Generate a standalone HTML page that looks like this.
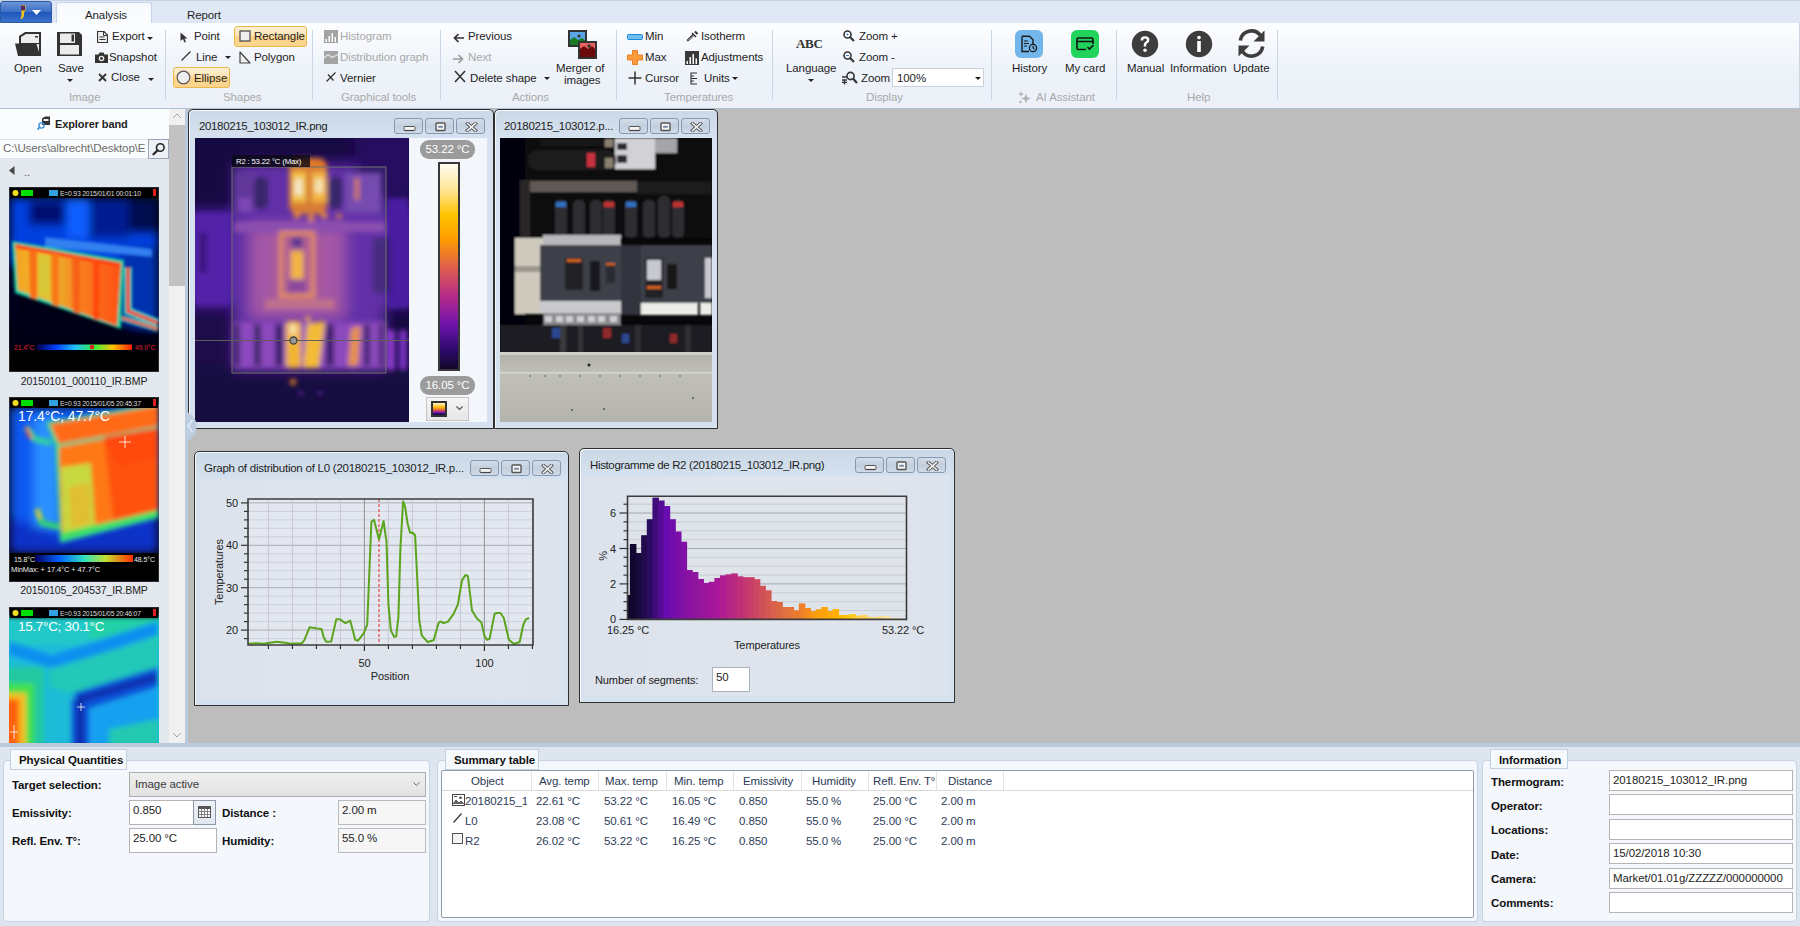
<!DOCTYPE html>
<html><head><meta charset="utf-8">
<style>
*{box-sizing:border-box;margin:0;padding:0}
html,body{width:1800px;height:926px;overflow:hidden;background:#bdbdbd;font-family:"Liberation Sans",sans-serif;font-size:11.5px;letter-spacing:-0.1px;color:#1e1e1e;position:relative}
.a{position:absolute}
.t{position:absolute;white-space:nowrap;line-height:14px}
.g{color:#a9a9a9}
.b{font-weight:bold}
/* ribbon */
#tabs{left:0;top:0;width:1800px;height:23px;background:#dfe8f4;border-top:1px solid #c4d2e3}
#rib{left:0;top:23px;width:1800px;height:86px;background:linear-gradient(#fdfeff 0px,#f6f8fc 20px,#eef3fa 45px,#ecf1f9 82px);border-bottom:1px solid #b3c2d3;border-right:1px solid #c9d5e3}
.sep{position:absolute;top:30px;width:1px;height:70px;background:#c9d6e5}
.dd{position:absolute;width:0;height:0;border-left:3px solid transparent;border-right:3px solid transparent;border-top:3px solid #222}
.hl{position:absolute;background:linear-gradient(#fdf0d6,#fde3b0 45%,#fcd48c 52%,#fbd58e);border:1px solid #eab74a;border-radius:3px}
/* windows */
.win{position:absolute;background:linear-gradient(#cbd8e6,#d6e2ef 30px,#d5e1ee);border:1px solid #2f2f2f;border-radius:5px 5px 0 0;box-shadow:inset 1px 1px 0 #f4f8fc}
.wt{position:absolute;white-space:nowrap;line-height:14px;color:#1e1e1e}
.wb{position:absolute;width:29px;height:16px;border:1px solid #8799b1;border-radius:3px;background:linear-gradient(#d4deea,#c3cfdd 50%,#cfdbe8)}
.cnt{position:absolute;background:#dfe4ec}
/* bottom */
.grp{position:absolute;background:#f4f7fb;border:1px solid #c5d3e2;border-radius:4px}
.tab{position:absolute;background:#f6f9fc;border:1px solid #c2d1e2;font-weight:bold;color:#111;line-height:14px;padding-left:8px}
.inp{position:absolute;background:#fff;border:1px solid #b4b4b4;padding:2px 0 0 3px;line-height:14px;white-space:nowrap;color:#1e1e1e}
</style></head><body>

<!-- ============ RIBBON ============ -->
<div id="tabs" class="a"></div>
<div class="a" style="left:0;top:1px;width:52px;height:22px;border-radius:3px 3px 0 0;background:linear-gradient(#6d95d6,#3d6fc6 48%,#1e57bb 52%,#3a72cc);border:1px solid #2a5aa8"></div>
<div class="a" style="left:56px;top:2px;width:96px;height:22px;background:linear-gradient(#f7fafd,#fbfdff);border:1px solid #c6d5e6;border-bottom:none;border-radius:3px 3px 0 0"></div>
<div class="t" style="left:85px;top:8px">Analysis</div>
<div class="t" style="left:187px;top:8px">Report</div>
<div id="rib" class="a"></div>
<!-- separators -->
<div class="sep" style="left:165px"></div>
<div class="sep" style="left:312px"></div>
<div class="sep" style="left:440px"></div>
<div class="sep" style="left:616px"></div>
<div class="sep" style="left:772px"></div>
<div class="sep" style="left:991px"></div>
<div class="sep" style="left:1116px"></div>
<div class="sep" style="left:1277px"></div>
<!-- group labels -->
<div class="t g" style="left:69px;top:90px">Image</div>
<div class="t g" style="left:223px;top:90px">Shapes</div>
<div class="t g" style="left:341px;top:90px">Graphical tools</div>
<div class="t g" style="left:512px;top:90px">Actions</div>
<div class="t g" style="left:664px;top:90px">Temperatures</div>
<div class="t g" style="left:866px;top:90px">Display</div>
<div class="t g" style="left:1036px;top:90px">AI Assistant</div>
<div class="t g" style="left:1187px;top:90px">Help</div>

<!-- IMAGE group -->
<svg class="a" style="left:15px;top:31px" width="27" height="26" viewBox="0 0 27 26">
 <polygon points="4,13 4,5 10,1 26,1 26,25 4,25" fill="#333"/>
 <polygon points="6,12 6,6 11,3 24,3 24,12" fill="#ececec"/>
 <rect x="20" y="5" width="3" height="1.5" fill="#333"/>
 <polygon points="0,12.5 21,12.5 26,25 3,25" fill="#333"/>
 <polygon points="21.5,13 24,13 24,21" fill="#ececec"/>
</svg>
<div class="t" style="left:14px;top:61px">Open</div>
<svg class="a" style="left:57px;top:32px" width="25" height="25" viewBox="0 0 25 25">
 <polygon points="0,0 22,0 25,3 25,24 0,24" fill="#333"/>
 <rect x="3" y="1.5" width="15" height="9.5" fill="#ececec"/>
 <rect x="14.5" y="2.5" width="2.5" height="7" fill="#333"/>
 <rect x="3" y="13" width="19" height="9.5" fill="#ececec"/>
</svg>
<div class="t" style="left:58px;top:61px">Save</div>
<div class="dd" style="left:67px;top:79px"></div>
<svg class="a" style="left:97px;top:31px" width="11" height="12" viewBox="0 0 11 12">
 <path d="M0.5 0.5H7L10.5 4V11.5H0.5Z" fill="#f0f0f0" stroke="#333" stroke-width="1.2"/>
 <path d="M6.5 0.5V4.5H10.5" fill="none" stroke="#333"/>
 <rect x="2.5" y="5.5" width="5" height="1" fill="#333"/><rect x="2.5" y="8" width="6" height="1" fill="#333"/>
</svg>
<div class="t" style="left:112px;top:29px">Export</div>
<div class="dd" style="left:147px;top:37px"></div>
<svg class="a" style="left:95px;top:52px" width="13" height="11" viewBox="0 0 13 11">
 <path d="M0 2.5H3.5L4.5 0.5H8.5L9.5 2.5H13V11H0Z" fill="#333"/>
 <circle cx="6.5" cy="6.5" r="2.8" fill="#e8e8e8"/><circle cx="6.5" cy="6.5" r="1.4" fill="#333"/>
</svg>
<div class="t" style="left:109px;top:50px">Snapshot</div>
<svg class="a" style="left:98px;top:73px" width="9" height="9" viewBox="0 0 9 9"><path d="M1 1L8 8M8 1L1 8" stroke="#333" stroke-width="1.8"/></svg>
<div class="t" style="left:111px;top:70px">Close</div>
<div class="dd" style="left:148px;top:78px"></div>

<!-- SHAPES -->
<div class="hl" style="left:234px;top:26px;width:73px;height:21px"></div>
<div class="hl" style="left:173px;top:67px;width:57px;height:21px"></div>
<svg class="a" style="left:180px;top:32px" width="8" height="11" viewBox="0 0 8 11"><path d="M0.5 0.5L7.5 6.5H4.5L6 10L4.5 10.5L3 7L0.5 9Z" fill="#333"/></svg>
<div class="t" style="left:194px;top:29px">Point</div>
<svg class="a" style="left:239px;top:30px" width="12" height="12" viewBox="0 0 12 12"><rect x="1" y="1" width="10" height="10" fill="#eee" stroke="#444" stroke-width="1.2"/></svg>
<div class="t" style="left:254px;top:29px">Rectangle</div>
<svg class="a" style="left:181px;top:51px" width="10" height="10" viewBox="0 0 10 10"><path d="M0.5 9.5L9.5 0.5" stroke="#333" stroke-width="1.3"/></svg>
<div class="t" style="left:196px;top:50px">Line</div>
<div class="dd" style="left:225px;top:56px"></div>
<svg class="a" style="left:239px;top:51px" width="12" height="13" viewBox="0 0 12 13"><path d="M1 1V12H11Z" fill="#eee" stroke="#444" stroke-width="1.2" stroke-linejoin="round"/></svg>
<div class="t" style="left:254px;top:50px">Polygon</div>
<svg class="a" style="left:176px;top:70px" width="15" height="15" viewBox="0 0 15 15"><circle cx="7.5" cy="7.5" r="6.3" fill="#eee" stroke="#555" stroke-width="1.2"/></svg>
<div class="t" style="left:194px;top:71px">Ellipse</div>

<!-- GRAPHICAL TOOLS -->
<svg class="a" style="left:324px;top:30px" width="14" height="13" viewBox="0 0 14 13"><rect width="14" height="13" fill="#a3a3a3"/><rect x="1.5" y="9" width="1.5" height="3" fill="#fff"/><rect x="4.5" y="6" width="1.5" height="6" fill="#fff"/><rect x="7.5" y="3" width="1.5" height="9" fill="#fff"/><rect x="10.5" y="7" width="1.5" height="5" fill="#fff"/></svg>
<div class="t g" style="left:340px;top:29px">Histogram</div>
<svg class="a" style="left:324px;top:51px" width="14" height="13" viewBox="0 0 14 13"><rect width="14" height="13" fill="#a3a3a3"/><path d="M0 7L4 3.5L8 6.5L14 3.5" stroke="#e6e6e6" stroke-width="1.2" fill="none"/></svg>
<div class="t g" style="left:340px;top:50px">Distribution graph</div>
<svg class="a" style="left:326px;top:72px" width="10" height="10" viewBox="0 0 10 10"><path d="M0.5 9.5L9.5 0.5M2 2.5L7.5 8.5" stroke="#333" stroke-width="1.3"/></svg>
<div class="t" style="left:340px;top:71px">Vernier</div>

<!-- ACTIONS -->
<svg class="a" style="left:453px;top:33px" width="12" height="10" viewBox="0 0 12 10"><path d="M11 5H2M5.5 1L1.5 5L5.5 9" stroke="#333" stroke-width="1.7" fill="none"/></svg>
<div class="t" style="left:468px;top:29px">Previous</div>
<svg class="a" style="left:452px;top:54px" width="12" height="10" viewBox="0 0 12 10"><path d="M1 5H10M6.5 1L10.5 5L6.5 9" stroke="#9a9a9a" stroke-width="1.7" fill="none"/></svg>
<div class="t g" style="left:468px;top:50px">Next</div>
<svg class="a" style="left:454px;top:70px" width="12" height="13" viewBox="0 0 12 13"><path d="M1 1L11 12M11 1L1 12" stroke="#333" stroke-width="1.6"/></svg>
<div class="t" style="left:470px;top:71px">Delete shape</div>
<div class="dd" style="left:544px;top:77px"></div>
<svg class="a" style="left:568px;top:30px" width="29" height="29" viewBox="0 0 29 29">
 <rect x="0" y="0" width="19" height="17" fill="#333"/><rect x="2" y="2" width="15" height="13" fill="#5aa5e6"/>
 <path d="M2 15V10L6 7L10 10L14 8L17 10V15Z" fill="#1a7a22"/><circle cx="11" cy="6" r="1.6" fill="#333"/>
 <rect x="10" y="11" width="19" height="18" fill="#333"/><rect x="12" y="13" width="15" height="14" fill="#e86060"/>
 <path d="M12 27V19L16 16L20 19L24 16L27 19V27Z" fill="#6a0a0a"/><circle cx="21" cy="16" r="1.7" fill="#333"/>
</svg>
<div class="t" style="left:556px;top:61px">Merger of</div>
<div class="t" style="left:564px;top:73px">images</div>

<!-- TEMPERATURES -->
<svg class="a" style="left:627px;top:34px" width="16" height="6" viewBox="0 0 16 6"><rect x="0.5" y="0.5" width="15" height="5" rx="1" fill="#6dc1f1" stroke="#1d88d6"/></svg>
<div class="t" style="left:645px;top:29px">Min</div>
<svg class="a" style="left:627px;top:50px" width="16" height="15" viewBox="0 0 16 15"><path d="M5.5 0.5H10.5V5H15.5V10H10.5V14.5H5.5V10H0.5V5H5.5Z" fill="#fb9a3a" stroke="#e8802a" stroke-linejoin="round"/></svg>
<div class="t" style="left:645px;top:50px">Max</div>
<svg class="a" style="left:628px;top:71px" width="14" height="14" viewBox="0 0 14 14"><path d="M7 0.5V13.5M0.5 7H13.5" stroke="#333" stroke-width="1.5"/></svg>
<div class="t" style="left:645px;top:71px">Cursor</div>
<svg class="a" style="left:686px;top:30px" width="13" height="12" viewBox="0 0 13 12"><path d="M1.5 10.5L7.5 4.5M9 1.5L11.5 4" stroke="#333" stroke-width="2"/><path d="M6 3L10 7" stroke="#333" stroke-width="1.5"/><path d="M1 11L3 10.5L8 5.5L7.2 4.8L2 9.5Z" fill="#ddd" stroke="#333" stroke-width="0.8"/></svg>
<div class="t" style="left:701px;top:29px">Isotherm</div>
<svg class="a" style="left:685px;top:51px" width="14" height="14" viewBox="0 0 14 14"><rect width="14" height="14" fill="#3a3a3a"/><rect x="1.5" y="10" width="1.5" height="3" fill="#fff"/><rect x="4.5" y="6" width="1.5" height="7" fill="#fff"/><rect x="7.5" y="3" width="1.5" height="10" fill="#fff"/><rect x="10.5" y="7.5" width="1.5" height="5.5" fill="#fff"/></svg>
<div class="t" style="left:701px;top:50px">Adjustments</div>
<svg class="a" style="left:690px;top:72px" width="9" height="13" viewBox="0 0 9 13"><path d="M1 0.5V12.5M1 1H7M1 4H4M1 6.5H7M1 9H4M1 12H7" stroke="#333" stroke-width="1.1" fill="none"/></svg>
<div class="t" style="left:704px;top:71px">Units</div>
<div class="dd" style="left:732px;top:77px"></div>

<!-- DISPLAY -->
<div class="t" style="left:796px;top:37px;font-family:'Liberation Serif',serif;font-weight:bold;font-size:13px;letter-spacing:-0.3px;color:#333">ABC</div>
<div class="t" style="left:786px;top:61px">Language</div>
<div class="dd" style="left:808px;top:79px"></div>
<svg class="a" style="left:843px;top:30px" width="12" height="12" viewBox="0 0 12 12"><circle cx="4.5" cy="4.5" r="3.5" fill="#fff" stroke="#333" stroke-width="1.6"/><path d="M7 7L11 11" stroke="#333" stroke-width="2.2"/><circle cx="4.5" cy="4.5" r="1" fill="#2a6fd0"/></svg>
<div class="t" style="left:859px;top:29px">Zoom +</div>
<svg class="a" style="left:843px;top:51px" width="12" height="12" viewBox="0 0 12 12"><circle cx="4.5" cy="4.5" r="3.5" fill="#fff" stroke="#333" stroke-width="1.6"/><path d="M7 7L11 11" stroke="#333" stroke-width="2.2"/><path d="M3 4.5H6" stroke="#2a6fd0" stroke-width="0.9"/></svg>
<div class="t" style="left:859px;top:50px">Zoom -</div>
<svg class="a" style="left:842px;top:71px" width="16" height="14" viewBox="0 0 16 14"><circle cx="8.5" cy="5" r="3.6" fill="none" stroke="#333" stroke-width="1.6"/><path d="M11 7.5L15 12" stroke="#333" stroke-width="2.2"/><path d="M0 6H5M0 9H5M2.5 9V13.5M0 11.3H5" stroke="#333" stroke-width="1.3"/></svg>
<div class="t" style="left:861px;top:71px">Zoom</div>
<div class="a" style="left:892px;top:68px;width:92px;height:19px;background:#fff;border:1px solid #c8d1dc"></div>
<div class="t" style="left:897px;top:71px">100%</div>
<div class="dd" style="left:975px;top:77px"></div>

<!-- AI ASSISTANT -->
<div class="a" style="left:1015px;top:30px;width:28px;height:28px;border-radius:6px;background:#72b6ec"></div>
<svg class="a" style="left:1021px;top:35px" width="17" height="18" viewBox="0 0 17 18">
 <path d="M1 1.2H8.5L12 4.7V9M1 1.2V16.5H8" fill="none" stroke="#1b1b1b" stroke-width="1.4"/>
 <path d="M3 6H7M3 8.5H8M3 11H6" stroke="#1b1b1b" stroke-width="1.1"/>
 <circle cx="12" cy="13" r="3.6" fill="#72b6ec" stroke="#1b1b1b" stroke-width="1.3"/><path d="M12 11V13.3L13.5 14.3" stroke="#1b1b1b" stroke-width="1"/>
</svg>
<div class="t" style="left:1012px;top:61px">History</div>
<div class="a" style="left:1071px;top:30px;width:28px;height:28px;border-radius:6px;background:#22d45b"></div>
<svg class="a" style="left:1076px;top:37px" width="19" height="14" viewBox="0 0 19 14">
 <path d="M10 12.5H2.5Q1 12.5 1 11V2.5Q1 1 2.5 1H15.5Q17 1 17 2.5V7" fill="none" stroke="#111" stroke-width="1.6"/>
 <path d="M1 4.5H17" stroke="#111" stroke-width="1.6"/><path d="M11.5 10L13.5 12L17.5 8" fill="none" stroke="#111" stroke-width="1.6"/>
</svg>
<div class="t" style="left:1065px;top:61px">My card</div>
<svg class="a" style="left:1018px;top:91px" width="13" height="13" viewBox="0 0 13 13"><path d="M8 2.5L9.3 6.2L13 7.5L9.3 8.8L8 12.5L6.7 8.8L3 7.5L6.7 6.2Z" fill="#b0b0b0"/><path d="M3 0L3.8 2.2L6 3L3.8 3.8L3 6L2.2 3.8L0 3L2.2 2.2Z" fill="#b0b0b0"/><circle cx="2.5" cy="11" r="1.2" fill="#b0b0b0"/></svg>

<!-- HELP -->
<svg class="a" style="left:1131px;top:30px" width="28" height="28" viewBox="0 0 28 28"><circle cx="14" cy="14" r="13.2" fill="#3d3d3d"/><path d="M9.6 10.5Q9.6 6.3 14 6.3Q18.4 6.3 18.4 10Q18.4 12.3 16 13.5Q15.2 14 15.2 15.5V16.5H12.7V15.2Q12.7 12.8 14.6 11.8Q15.9 11.1 15.9 10Q15.9 8.6 14 8.6Q12.1 8.6 12.1 10.5Z" fill="#fff"/><circle cx="14" cy="20.3" r="1.7" fill="#fff"/></svg>
<div class="t" style="left:1127px;top:61px">Manual</div>
<svg class="a" style="left:1185px;top:30px" width="28" height="28" viewBox="0 0 28 28"><circle cx="14" cy="14" r="13.2" fill="#3d3d3d"/><circle cx="14" cy="7.6" r="1.8" fill="#fff"/><rect x="12.2" y="11" width="3.6" height="11" fill="#fff"/></svg>
<div class="t" style="left:1170px;top:61px">Information</div>
<svg class="a" style="left:1237px;top:29px" width="29" height="29" viewBox="0 0 29 29"><path d="M3.3 11.5A11.3 11.3 0 0 1 23.5 6.5" fill="none" stroke="#3d3d3d" stroke-width="3.6"/><path d="M27.5 1.5V12.5H16.5Z" fill="#3d3d3d"/><path d="M25.7 17.5A11.3 11.3 0 0 1 5.5 22.5" fill="none" stroke="#3d3d3d" stroke-width="3.6"/><path d="M1.5 27.5V16.5H12.5Z" fill="#3d3d3d"/></svg>
<div class="t" style="left:1233px;top:61px">Update</div>

<!-- app button logo -->
<svg class="a" style="left:19px;top:4px" width="8" height="16" viewBox="0 0 8 16"><path d="M2 1H6.5V6.5L5 9V12L3 15H1.5L2.5 11V8L2 6Z" fill="#f2c21a"/><rect x="2" y="1.5" width="4" height="5" fill="#5a2a5a"/></svg>
<svg class="a" style="left:32px;top:10px" width="9" height="6" viewBox="0 0 9 6"><path d="M0 0H9L4.5 5Z" fill="#fff"/></svg>


<!-- ============ EXPLORER ============ -->
<div class="a" style="left:0;top:109px;width:169px;height:634px;background:#e3e8ef"></div>
<div class="a" style="left:0;top:109px;width:169px;height:30px;background:#fbfcfe"></div>
<svg class="a" style="left:37px;top:116px" width="14" height="14" viewBox="0 0 14 14"><path d="M5 2.5L8 0.5H13V9H5Z" fill="#333"/><rect x="6.5" y="3" width="5" height="2" fill="#eee"/><circle cx="4.5" cy="9.5" r="2.6" fill="none" stroke="#3b8fd6" stroke-width="1.4"/><path d="M2.6 11.4L0.5 13.5" stroke="#3b8fd6" stroke-width="1.6"/></svg>
<div class="t b" style="left:55px;top:117px;font-size:11px">Explorer band</div>
<div class="a" style="left:0;top:139px;width:149px;height:20px;background:#fbfcfd;border:1px solid #dde3ea;border-left:none"></div>
<div class="t" style="left:3px;top:141px;color:#6d6d6d">C:\Users\albrecht\Desktop\E</div>
<div class="a" style="left:148px;top:139px;width:21px;height:20px;background:#eef2f8;border:1px solid #9aa6b4"></div>
<svg class="a" style="left:152px;top:142px" width="14" height="14" viewBox="0 0 14 14"><circle cx="8.3" cy="5.5" r="3.8" fill="none" stroke="#222" stroke-width="1.6"/><path d="M5.6 8.2L1.5 12.3" stroke="#222" stroke-width="2.2" stroke-linecap="round"/></svg>
<svg class="a" style="left:9px;top:166px" width="6" height="9" viewBox="0 0 6 9"><path d="M5.5 0V9L0 4.5Z" fill="#444"/></svg>
<div class="t" style="left:24px;top:165px;color:#555">..</div>
<!-- scrollbar -->
<div class="a" style="left:169px;top:109px;width:16px;height:634px;background:#f0f0f0"></div>
<div class="a" style="left:169px;top:125px;width:16px;height:161px;background:#c2c2c2"></div>
<svg class="a" style="left:172px;top:113px" width="10" height="6" viewBox="0 0 10 6"><path d="M1 5L5 1L9 5" fill="none" stroke="#a3a3a3" stroke-width="1"/></svg>
<svg class="a" style="left:172px;top:732px" width="10" height="6" viewBox="0 0 10 6"><path d="M1 1L5 5L9 1" fill="none" stroke="#a3a3a3" stroke-width="1"/></svg>
<div class="a" style="left:185px;top:109px;width:3px;height:634px;background:#b9cbdf"></div>

<!-- thumbnail 1 -->
<svg class="a" style="left:9px;top:187px" width="150" height="185" viewBox="0 0 150 185">
 <defs><filter id="bl1" x="-10%" y="-10%" width="120%" height="120%"><feGaussianBlur stdDeviation="1.6"/></filter>
 <filter id="bl1b" x="-10%" y="-10%" width="120%" height="120%"><feGaussianBlur stdDeviation="4"/></filter>
 <linearGradient id="cb1" x1="0" x2="1"><stop offset="0" stop-color="#000050"/><stop offset="0.2" stop-color="#0040ff"/><stop offset="0.4" stop-color="#20c0ff"/><stop offset="0.6" stop-color="#30f040"/><stop offset="0.8" stop-color="#ffc000"/><stop offset="1" stop-color="#ff2000"/></linearGradient>
 <linearGradient id="rad1" x1="0" x2="1"><stop offset="0" stop-color="#f8a020"/><stop offset="0.3" stop-color="#e8c030"/><stop offset="0.6" stop-color="#f88020"/><stop offset="1" stop-color="#ff5010"/></linearGradient></defs>
 <rect width="150" height="185" fill="#2a2a2a"/>
 <rect x="1" y="1" width="148" height="183" fill="#000"/>
 <g filter="url(#bl1b)">
  <rect x="1" y="11" width="148" height="150" fill="#000a40"/>
  <rect x="1" y="11" width="148" height="66" fill="#0040e0"/>
  <rect x="20" y="14" width="36" height="24" fill="#001070"/>
  <rect x="80" y="11" width="40" height="40" fill="#001a90"/>
  <rect x="120" y="11" width="29" height="35" fill="#000a50"/>
  <rect x="58" y="11" width="22" height="40" fill="#0a60ff"/>
  <rect x="112" y="60" width="37" height="80" fill="#0030b0"/>
  <polygon points="5,100 112,135 149,145 149,160 1,160" fill="#000418"/>
 </g>
 <g filter="url(#bl1)">
  <polygon points="36,50 143,62 143,70 36,60" fill="#3080f0"/>
  <polygon points="3,54 115,73 112,142 6,106" fill="#10d0a0"/>
  <polygon points="6,57 112,76 108,139 9,103" fill="url(#rad1)"/>
  <polygon points="6,57 112,76 112,80 6,61" fill="#ff3a10"/>
  <polygon points="20,62 28,63 28,113 21,111" fill="#f87018"/>
  <polygon points="42,66 50,67 50,120 43,118" fill="#f87818"/>
  <polygon points="63,69 71,70 71,127 64,125" fill="#f86018"/>
  <polygon points="84,72 91,73 90,133 84,132" fill="#ff4a10"/>
  <polygon points="30,68 40,69 40,110 30,107" fill="#d8c838"/>
  <path d="M119 80V124L149 136" fill="none" stroke="#20d0c0" stroke-width="8"/>
  <path d="M119 80V124L149 136" fill="none" stroke="#ff2010" stroke-width="3.5"/>
  <path d="M113 131L149 142" fill="none" stroke="#20c0c0" stroke-width="6"/>
  <path d="M113 131L149 142" fill="none" stroke="#ff4010" stroke-width="2.5"/>
 </g>
 <rect x="1" y="1" width="148" height="10" fill="#000"/>
 <circle cx="6.5" cy="6" r="3" fill="#f0e020"/>
 <rect x="12" y="3" width="12" height="6" fill="#00e000"/>
 <rect x="40" y="3" width="9" height="6" fill="#30a0e0"/>
 <text x="51" y="9" fill="#ddd" font-size="6.8" font-family="Liberation Sans" letter-spacing="-0.2">E=0.93  2015/01/01 00:01:10</text>
 <rect x="144" y="2" width="3" height="7" fill="#e02020"/>
 <rect x="28" y="157.5" width="95" height="5.5" fill="url(#cb1)"/>
 <circle cx="83" cy="160" r="2.3" fill="#e02020"/>
 <text x="5" y="163" fill="#e02020" font-size="6.8" font-family="Liberation Sans">21.4°C</text>
 <text x="126" y="163" fill="#e02020" font-size="6.8" font-family="Liberation Sans">49.0°C</text>
</svg>
<div class="t" style="left:9px;top:374px;width:150px;text-align:center;font-size:10.5px;color:#222">20150101_000110_IR.BMP</div>

<!-- thumbnail 2 -->
<svg class="a" style="left:9px;top:397px" width="150" height="185" viewBox="0 0 150 185">
 <defs><filter id="bl2" x="-10%" y="-10%" width="120%" height="120%"><feGaussianBlur stdDeviation="2"/></filter>
 <filter id="bl2b" x="-10%" y="-10%" width="120%" height="120%"><feGaussianBlur stdDeviation="5"/></filter>
 <linearGradient id="cb2" x1="0" x2="1"><stop offset="0" stop-color="#000060"/><stop offset="0.25" stop-color="#0060ff"/><stop offset="0.5" stop-color="#30e0c0"/><stop offset="0.72" stop-color="#c0e030"/><stop offset="1" stop-color="#ff3000"/></linearGradient></defs>
 <rect width="150" height="185" fill="#2a2a2a"/>
 <rect x="1" y="1" width="148" height="183" fill="#000"/>
 <g filter="url(#bl2b)">
  <rect x="1" y="10" width="148" height="146" fill="#1058f0"/>
  <rect x="25" y="20" width="25" height="110" fill="#2a90ff"/>
  <polygon points="1,120 53,140 149,118 149,156 1,156" fill="#0a30c8"/>
 </g>
 <g filter="url(#bl2)">
  <polygon points="37,25 149,6 149,121 51,146 46,49" fill="#30d890"/>
  <polygon points="41,27 149,9 149,29 50,47" fill="#ff6a18"/>
  <polygon points="50,50 149,32 149,117 53,140" fill="#ff5210"/>
  <polygon points="50,50 95,42 105,128 53,140" fill="#ff7818"/>
  <polygon points="52,70 82,66 86,128 54,138" fill="#c8d840"/>
  <polygon points="60,90 80,86 82,126 62,132" fill="#e0c030"/>
  <polygon points="52,136 149,113 149,119 53,142" fill="#40e060"/>
  <polygon points="95,40 149,31 149,60 110,70" fill="#ff4a10"/>
  <path d="M17 30L26 42L42 46" fill="none" stroke="#30d0a0" stroke-width="6"/>
  <path d="M17 30L22 42" fill="none" stroke="#ff4010" stroke-width="3"/>
  <path d="M28 112L33 126L50 130" fill="none" stroke="#30d070" stroke-width="6"/>
  <path d="M28 112L31 122" fill="none" stroke="#f0c020" stroke-width="3"/>
 </g>
 <rect x="1" y="1" width="148" height="10" fill="#000"/>
 <circle cx="6.5" cy="6" r="3" fill="#f0e020"/><rect x="12" y="3" width="12" height="6" fill="#00e000"/><rect x="40" y="3" width="9" height="6" fill="#30a0e0"/>
 <text x="51" y="9" fill="#ddd" font-size="6.8" font-family="Liberation Sans" letter-spacing="-0.2">E=0.93  2015/01/05 20:45:37</text>
 <rect x="144" y="2" width="3" height="7" fill="#e02020"/>
 <text x="9" y="24" fill="#fff" font-size="15" font-family="Liberation Sans" textLength="92" lengthAdjust="spacingAndGlyphs">17.4°C; 47.7°C</text>
 <rect x="1" y="156" width="148" height="28" fill="#000"/>
 <rect x="26" y="158" width="98" height="7" fill="url(#cb2)"/>
 <text x="5" y="165" fill="#eee" font-size="7" font-family="Liberation Sans">15.8°C</text>
 <text x="125" y="165" fill="#eee" font-size="7" font-family="Liberation Sans">48.5°C</text>
 <text x="2" y="175" fill="#eee" font-size="7.5" font-family="Liberation Sans">MinMax: + 17.4°C   + 47.7°C</text>
 <path d="M116 39V51M110 45H122" stroke="#fff" stroke-width="0.8"/>
</svg>
<div class="t" style="left:9px;top:583px;width:150px;text-align:center;font-size:10.5px;color:#222">20150105_204537_IR.BMP</div>

<!-- thumbnail 3 -->
<svg class="a" style="left:9px;top:607px" width="150" height="136" viewBox="0 0 150 136">
 <defs><filter id="bl3" x="-10%" y="-10%" width="120%" height="120%"><feGaussianBlur stdDeviation="2.8"/></filter></defs>
 <rect width="150" height="136" fill="#2a2a2a"/>
 <rect x="1" y="1" width="148" height="135" fill="#000"/>
 <g filter="url(#bl3)">
  <rect x="-5" y="10" width="160" height="130" fill="#1cbcd8"/>
  <rect x="-5" y="10" width="160" height="28" fill="#22c8c8"/>
  <rect x="80" y="10" width="70" height="22" fill="#20d0a8"/>
  <polygon points="0,34 43,48 149,14 149,28 45,62 0,48" fill="#1090f0"/>
  <polygon points="40,62 149,30 149,62 66,88 40,80" fill="#20c8b8"/>
  <polygon points="64,86 149,60 149,80 72,104" fill="#1050d8"/>
  <rect x="62" y="92" width="18" height="48" fill="#1050d8"/>
  <polygon points="80,102 149,80 149,140 80,140" fill="#18a0f0"/>
  <polygon points="100,122 149,112 149,140 100,140" fill="#20c8b0"/>
  <rect x="-5" y="60" width="40" height="80" fill="#20c8a0"/>
  <rect x="-5" y="76" width="30" height="64" fill="#40e050"/>
  <rect x="-5" y="86" width="22" height="54" fill="#f0c020"/>
  <rect x="-5" y="92" width="15" height="48" fill="#ff6010"/>
  <path d="M68 93L149 70" stroke="#0a2aa8" stroke-width="6"/>
  <path d="M71 93V140" stroke="#0a2aa8" stroke-width="7"/>
 </g>
 <rect x="1" y="1" width="148" height="10" fill="#000"/>
 <circle cx="6.5" cy="6" r="3" fill="#f0e020"/><rect x="12" y="3" width="12" height="6" fill="#00e000"/><rect x="40" y="3" width="9" height="6" fill="#30a0e0"/>
 <text x="51" y="9" fill="#ddd" font-size="6.8" font-family="Liberation Sans" letter-spacing="-0.2">E=0.93  2015/01/05 20:46:07</text>
 <rect x="144" y="2" width="3" height="7" fill="#e02020"/>
 <text x="9" y="24" fill="#fff" font-size="13.5" font-family="Liberation Sans" letter-spacing="-0.3">15.7°C; 30.1°C</text>
 <path d="M72 96V104M68 100H76" stroke="#fff" stroke-width="0.8"/>
 <path d="M5 118V132M1 125H9" stroke="#fff" stroke-width="0.8"/>
</svg>

<!-- ============ WINDOWS ============ -->
<!-- IR window -->
<div class="win" style="left:188px;top:109px;width:306px;height:320px"></div>
<div class="wt" style="left:199px;top:119px;letter-spacing:-0.36px">20180215_103012_IR.png</div>
<div class="wb" style="left:394px;top:118px"><svg class="a" style="left:8px;top:6px" width="13" height="7" viewBox="0 0 13 7"><rect x="1" y="1.5" width="11" height="4" rx="0.8" fill="#f4f4f4" stroke="#555" stroke-width="1"/><path d="M1.5 5.5H11.5" stroke="#444" stroke-width="1.2"/></svg></div><div class="wb" style="left:425px;top:118px"><svg class="a" style="left:9px;top:3px" width="11" height="10" viewBox="0 0 11 10"><rect x="1" y="1" width="9" height="7.5" rx="0.8" fill="#f4f4f4" stroke="#555" stroke-width="1.4"/><rect x="3.2" y="3.8" width="4.6" height="2" fill="#7a8aa0"/></svg></div><div class="wb" style="left:456px;top:118px"><svg class="a" style="left:8px;top:3px" width="13" height="10" viewBox="0 0 13 10"><path d="M2.5 1.5L10.5 8.5M10.5 1.5L2.5 8.5" stroke="#555" stroke-width="3.4" stroke-linecap="square"/><path d="M2.5 1.5L10.5 8.5M10.5 1.5L2.5 8.5" stroke="#f4f4f4" stroke-width="1.6" stroke-linecap="square"/></svg></div>
<div class="a" style="left:409px;top:138px;width:78px;height:284px;background:#f3f6fa"></div>
<div class="a" style="left:420px;top:140px;width:55px;height:19px;border-radius:9px;background:#9b9b9b;color:#fff;text-align:center;line-height:19px;font-size:11.5px">53.22 °C</div>
<div class="a" style="left:438px;top:162px;width:22px;height:209px;border:2px solid #383838;background:linear-gradient(#fffdf2 0%,#ffe89a 12%,#ffc400 25%,#ff9c00 37%,#e0604a 50%,#b82c88 64%,#7014ac 78%,#300a70 90%,#120828 100%)"></div>
<div class="a" style="left:420px;top:376px;width:55px;height:19px;border-radius:9px;background:#9b9b9b;color:#fff;text-align:center;line-height:19px;font-size:11.5px">16.05 °C</div>
<div class="a" style="left:426px;top:397px;width:43px;height:24px;background:linear-gradient(#f4f4f4,#e6e6e6);border:1px solid #c3c3c3"></div>
<div class="a" style="left:431px;top:401px;width:16px;height:16px;border:2px solid #333;background:linear-gradient(#fff6c0,#ffb000 40%,#c03080 70%,#4010a0 85%,#100828)"></div>
<svg class="a" style="left:456px;top:406px" width="7" height="5" viewBox="0 0 7 5"><path d="M0.5 0.5L3.5 3.5L6.5 0.5" fill="none" stroke="#555" stroke-width="1.2"/></svg>

<!-- IR image -->
<svg class="a" style="left:195px;top:138px" width="214" height="284" viewBox="0 0 214 284">
 <defs>
  <filter id="bir" x="-5%" y="-5%" width="110%" height="110%"><feGaussianBlur stdDeviation="2.6"/></filter>
  <filter id="bir2" x="-20%" y="-20%" width="140%" height="140%"><feGaussianBlur stdDeviation="7"/></filter>
 </defs>
 <rect width="214" height="284" fill="#160a42"/>
 <g filter="url(#bir2)">
  <rect x="-10" y="72" width="234" height="96" fill="#4c1a9c"/>
  <rect x="-10" y="170" width="60" height="60" fill="#1e0c4a"/>
  <rect x="40" y="25" width="150" height="205" fill="#5c20a8"/>
  <rect x="55" y="88" width="95" height="92" fill="#a44ea4"/>
  <rect x="-10" y="232" width="234" height="60" fill="#150a40"/>
  <rect x="160" y="-10" width="60" height="70" fill="#261060"/>
 </g>
 <g filter="url(#bir)">
  <rect x="0" y="75" width="36" height="92" fill="#5222a8"/>
  <rect x="4" y="95" width="8" height="40" fill="#3a1680"/>
  <rect x="192" y="60" width="22" height="110" fill="#4a1aa0"/>
  <rect x="178" y="100" width="18" height="55" fill="#3a1a78"/>
  <rect x="40" y="35" width="20" height="40" fill="#5a2c98"/><rect x="44" y="60" width="12" height="14" fill="#7a3ab8"/>
  <rect x="150" y="35" width="36" height="40" fill="#7040b0"/>
  <rect x="59" y="39" width="14" height="32" rx="6" fill="#2a1660"/>
  <rect x="133" y="39" width="14" height="32" rx="6" fill="#2a1660"/>
  <rect x="94" y="20" width="38" height="56" rx="9" fill="#e07828"/>
  <rect x="97" y="34" width="14" height="30" fill="#ffc838"/>
  <rect x="100" y="41" width="7" height="16" fill="#fff6d0"/>
  <rect x="117" y="34" width="15" height="30" fill="#ffb830"/>
  <rect x="120" y="41" width="8" height="14" fill="#fff0b0"/>
  <rect x="160" y="40" width="4" height="22" fill="#e07838"/>
  <circle cx="102" cy="77" r="3.5" fill="#f08830"/><circle cx="116" cy="80" r="3.5" fill="#f08838"/><circle cx="129" cy="77" r="3.5" fill="#f08838"/><circle cx="144" cy="78" r="3" fill="#d07048"/>
  <rect x="40" y="84" width="150" height="10" fill="#8a44b0"/>
  <rect x="75" y="100" width="55" height="65" fill="#a8509c"/>
  <rect x="86" y="95" width="32" height="63" fill="none" stroke="#f08c3c" stroke-width="4"/>
  <rect x="90" y="97" width="24" height="59" fill="#b85c8c"/>
  <rect x="96" y="99" width="12" height="11" fill="#5a2a90"/>
  <rect x="96" y="113" width="12" height="28" fill="#ffb830"/>
  <rect x="93" y="142" width="18" height="13" fill="#8a3c9c"/>
  <rect x="70" y="161" width="70" height="10" fill="#c46c88"/>
  <circle cx="113" cy="181" r="3" fill="#f0a040"/>
  <rect x="38" y="184" width="153" height="46" fill="#8a3cc0"/>
  <rect x="39" y="186" width="6" height="42" fill="#2e1464"/><rect x="59" y="186" width="7" height="42" fill="#2e1464"/><rect x="80" y="186" width="8" height="42" fill="#2a1060"/>
  <rect x="131" y="186" width="8" height="42" fill="#2a1060"/><rect x="169" y="186" width="6" height="42" fill="#2e1464"/><rect x="184" y="186" width="5" height="42" fill="#2e1464"/>
  <rect x="91" y="183" width="15" height="47" rx="4" fill="#ffb820"/>
  <rect x="95" y="186" width="6" height="10" fill="#fff0b0"/>
  <polygon points="112,186 130,183 124,230 108,230" fill="#ffc028"/>
  <polygon points="156,190 166,188 163,228 153,228" fill="#f09040"/>
  <rect x="192" y="192" width="8" height="40" fill="#8a3ac8"/><rect x="204" y="192" width="8" height="40" fill="#7a30c0"/>
  <circle cx="98" cy="244" r="3" fill="#f08a20"/>
  <circle cx="106" cy="255" r="2" fill="#7a30b8"/><circle cx="125" cy="255" r="2" fill="#7a30b8"/>
 </g>
 <rect x="37" y="29" width="154" height="206" fill="rgba(160,160,170,0.12)" stroke="#707070" stroke-width="1"/>
 <rect x="37" y="17" width="78" height="12" fill="rgba(10,10,20,0.8)"/>
 <text x="41" y="26" fill="#fff" font-size="7.8" font-family="Liberation Sans" letter-spacing="-0.2">R2 : 53.22 °C (Max)</text>
 <path d="M0 202.5H214" stroke="#5e5e5e" stroke-width="1"/>
 <circle cx="98.5" cy="202.5" r="3.5" fill="#9a9a9a" stroke="#444" stroke-width="1.3"/>
</svg>

<!-- Photo window -->
<div class="win" style="left:494px;top:109px;width:224px;height:320px"></div>
<div class="wt" style="left:504px;top:119px;letter-spacing:-0.3px">20180215_103012.p...</div>
<div class="wb" style="left:619px;top:118px"><svg class="a" style="left:8px;top:6px" width="13" height="7" viewBox="0 0 13 7"><rect x="1" y="1.5" width="11" height="4" rx="0.8" fill="#f4f4f4" stroke="#555" stroke-width="1"/><path d="M1.5 5.5H11.5" stroke="#444" stroke-width="1.2"/></svg></div><div class="wb" style="left:650px;top:118px"><svg class="a" style="left:9px;top:3px" width="11" height="10" viewBox="0 0 11 10"><rect x="1" y="1" width="9" height="7.5" rx="0.8" fill="#f4f4f4" stroke="#555" stroke-width="1.4"/><rect x="3.2" y="3.8" width="4.6" height="2" fill="#7a8aa0"/></svg></div><div class="wb" style="left:681px;top:118px"><svg class="a" style="left:8px;top:3px" width="13" height="10" viewBox="0 0 13 10"><path d="M2.5 1.5L10.5 8.5M10.5 1.5L2.5 8.5" stroke="#555" stroke-width="3.4" stroke-linecap="square"/><path d="M2.5 1.5L10.5 8.5M10.5 1.5L2.5 8.5" stroke="#f4f4f4" stroke-width="1.6" stroke-linecap="square"/></svg></div>
<svg class="a" style="left:500px;top:138px" width="212" height="284" viewBox="0 0 212 284">
 <defs><filter id="bph" x="-5%" y="-5%" width="110%" height="110%"><feGaussianBlur stdDeviation="1.3"/></filter>
 <linearGradient id="pb" x1="0" x2="0" y1="0" y2="1"><stop offset="0" stop-color="#b0b0a8"/><stop offset="0.3" stop-color="#c0c0b8"/><stop offset="1" stop-color="#b4b4ac"/></linearGradient></defs>
 <rect width="212" height="284" fill="#08080a"/>
 <g filter="url(#bph)">
  <rect x="0" y="0" width="212" height="100" fill="#0a0a0c"/><rect x="0" y="0" width="25" height="284" fill="#060608"/>
  <rect x="115" y="0" width="40" height="31" fill="#d2d2d6"/>
  <rect x="117" y="5" width="10" height="7" fill="#2a2a2a"/><rect x="117" y="17" width="10" height="8" fill="#2a2a2a"/>
  <rect x="155" y="0" width="22" height="15" fill="#a4a4aa"/>
  <rect x="28" y="12" width="88" height="20" rx="9" fill="#1c1c1e"/><rect x="40" y="0" width="75" height="8" fill="#161618"/><rect x="105" y="20" width="8" height="10" fill="#8a8070"/><rect x="105" y="1" width="8" height="8" fill="#8a8070"/>
  <rect x="87" y="15" width="8" height="14" fill="#c83040"/>
  <rect x="25" y="43" width="112" height="11" fill="#5e5954"/><rect x="137" y="44" width="75" height="12" fill="#1a1a1a"/>
  <rect x="20" y="42" width="10" height="60" fill="#2a2826"/>
  <rect x="55" y="62" width="12" height="38" rx="5" fill="#2e2e32"/><rect x="56" y="64" width="10" height="5" fill="#3070c0"/>
  <rect x="73" y="62" width="12" height="38" rx="5" fill="#2e2e32"/>
  <rect x="90" y="62" width="12" height="38" rx="5" fill="#2e2e32"/>
  <rect x="103" y="62" width="12" height="38" rx="5" fill="#2e2e32"/><rect x="104" y="64" width="10" height="5" fill="#c03030"/>
  <rect x="125" y="62" width="12" height="38" rx="5" fill="#2e2e32"/><rect x="126" y="64" width="10" height="5" fill="#3070c0"/>
  <rect x="143" y="62" width="12" height="38" rx="5" fill="#2e2e32"/>
  <rect x="158" y="58" width="12" height="42" rx="5" fill="#2e2e32"/>
  <rect x="172" y="62" width="12" height="38" rx="5" fill="#2e2e32"/><rect x="173" y="64" width="10" height="5" fill="#c03030"/>
  <rect x="15" y="100" width="28" height="76" fill="#cfcabe"/>
  <rect x="15" y="128" width="28" height="6" fill="#9a968e"/>
  <rect x="43" y="97" width="78" height="11" fill="#b8b8bc"/>
  <rect x="40" y="107" width="172" height="58" fill="#3c404a"/>
  <rect x="121" y="107" width="20" height="70" fill="#32363e"/>
  <rect x="65" y="120" width="18" height="32" fill="#202228"/>
  <rect x="67" y="121" width="14" height="3" fill="#d06020"/>
  <rect x="90" y="123" width="10" height="30" fill="#18181c"/>
  <rect x="106" y="127" width="9" height="18" fill="#2a2a30"/>
  <rect x="145" y="120" width="18" height="40" fill="#202228"/>
  <rect x="147" y="122" width="14" height="20" fill="#c8c8d0"/>
  <rect x="147" y="148" width="14" height="3" fill="#d06020"/>
  <rect x="167" y="126" width="10" height="25" fill="#141418"/>
  <rect x="205" y="120" width="7" height="40" fill="#c8c8d0"/>
  <rect x="40" y="163" width="81" height="12" fill="#c9c9cc"/>
  <rect x="141" y="165" width="57" height="12" fill="#ecece8"/>
  <rect x="200" y="165" width="12" height="12" fill="#ecece8"/>
  <rect x="43" y="175" width="78" height="12" fill="#8a8a8e"/>
  <rect x="45" y="178" width="7" height="6" fill="#d0d0d2"/><rect x="56" y="178" width="7" height="6" fill="#d0d0d2"/><rect x="66" y="178" width="7" height="6" fill="#d0d0d2"/><rect x="77" y="178" width="7" height="6" fill="#d0d0d2"/><rect x="88" y="178" width="7" height="6" fill="#d0d0d2"/><rect x="98" y="178" width="7" height="6" fill="#d0d0d2"/><rect x="110" y="178" width="7" height="6" fill="#d0d0d2"/>
  <rect x="0" y="187" width="212" height="28" fill="#1e1e22"/>
  <rect x="60" y="187" width="6" height="28" fill="#3a3a3e"/><rect x="78" y="187" width="5" height="28" fill="#343438"/><rect x="135" y="187" width="6" height="28" fill="#2e2e32"/><rect x="185" y="187" width="6" height="28" fill="#2e2e32"/>
  <rect x="52" y="190" width="8" height="10" fill="#2a4a90"/><rect x="103" y="190" width="8" height="10" fill="#902a2a"/><rect x="122" y="196" width="7" height="9" fill="#2a4a90"/><rect x="170" y="196" width="7" height="9" fill="#902a2a"/>
  <rect x="106" y="125" width="9" height="2.5" fill="#d06020"/>
 </g>
 <rect x="0" y="214" width="212" height="70" fill="url(#pb)"/>
 <rect x="0" y="214" width="212" height="3" fill="#d0d0cc"/>
 <rect x="0" y="234" width="212" height="1.5" fill="#d6d6d0"/>
 <circle cx="89" cy="227" r="1.5" fill="#222"/>
 <g fill="#555"><circle cx="30" cy="238" r="0.8"/><circle cx="45" cy="238" r="0.8"/><circle cx="60" cy="238" r="0.8"/><circle cx="80" cy="238" r="0.8"/><circle cx="100" cy="238" r="0.8"/><circle cx="120" cy="238" r="0.8"/><circle cx="140" cy="238" r="0.8"/><circle cx="160" cy="238" r="0.8"/><circle cx="180" cy="238" r="0.8"/><circle cx="72" cy="272" r="1"/><circle cx="104" cy="271" r="1"/><circle cx="193" cy="260" r="1"/></g>
</svg>

<!-- Graph window -->
<div class="win" style="left:194px;top:451px;width:375px;height:255px"></div>
<div class="cnt" style="left:200px;top:479px;width:363px;height:220px;background:linear-gradient(90deg,#dde3ec,#dfe4ec 80%,#dbe3ee)"></div>
<div class="wt" style="left:204px;top:461px;letter-spacing:-0.24px">Graph of distribution of L0 (20180215_103012_IR.p...</div>
<div class="wb" style="left:470px;top:460px"><svg class="a" style="left:8px;top:6px" width="13" height="7" viewBox="0 0 13 7"><rect x="1" y="1.5" width="11" height="4" rx="0.8" fill="#f4f4f4" stroke="#555" stroke-width="1"/><path d="M1.5 5.5H11.5" stroke="#444" stroke-width="1.2"/></svg></div><div class="wb" style="left:501px;top:460px"><svg class="a" style="left:9px;top:3px" width="11" height="10" viewBox="0 0 11 10"><rect x="1" y="1" width="9" height="7.5" rx="0.8" fill="#f4f4f4" stroke="#555" stroke-width="1.4"/><rect x="3.2" y="3.8" width="4.6" height="2" fill="#7a8aa0"/></svg></div><div class="wb" style="left:532px;top:460px"><svg class="a" style="left:8px;top:3px" width="13" height="10" viewBox="0 0 13 10"><path d="M2.5 1.5L10.5 8.5M10.5 1.5L2.5 8.5" stroke="#555" stroke-width="3.4" stroke-linecap="square"/><path d="M2.5 1.5L10.5 8.5M10.5 1.5L2.5 8.5" stroke="#f4f4f4" stroke-width="1.6" stroke-linecap="square"/></svg></div>

<!-- Histogram window -->
<div class="win" style="left:579px;top:448px;width:376px;height:255px"></div>
<div class="cnt" style="left:585px;top:476px;width:364px;height:220px;background:linear-gradient(90deg,#dde3ec,#dfe4ec 80%,#dbe3ee)"></div>
<div class="wt" style="left:590px;top:458px;letter-spacing:-0.36px">Histogramme de R2 (20180215_103012_IR.png)</div>
<div class="wb" style="left:855px;top:457px"><svg class="a" style="left:8px;top:6px" width="13" height="7" viewBox="0 0 13 7"><rect x="1" y="1.5" width="11" height="4" rx="0.8" fill="#f4f4f4" stroke="#555" stroke-width="1"/><path d="M1.5 5.5H11.5" stroke="#444" stroke-width="1.2"/></svg></div><div class="wb" style="left:886px;top:457px"><svg class="a" style="left:9px;top:3px" width="11" height="10" viewBox="0 0 11 10"><rect x="1" y="1" width="9" height="7.5" rx="0.8" fill="#f4f4f4" stroke="#555" stroke-width="1.4"/><rect x="3.2" y="3.8" width="4.6" height="2" fill="#7a8aa0"/></svg></div><div class="wb" style="left:917px;top:457px"><svg class="a" style="left:8px;top:3px" width="13" height="10" viewBox="0 0 13 10"><path d="M2.5 1.5L10.5 8.5M10.5 1.5L2.5 8.5" stroke="#555" stroke-width="3.4" stroke-linecap="square"/><path d="M2.5 1.5L10.5 8.5M10.5 1.5L2.5 8.5" stroke="#f4f4f4" stroke-width="1.6" stroke-linecap="square"/></svg></div>

<svg class="a" style="left:185px;top:412px" width="12" height="29" viewBox="0 0 12 29"><path d="M0 0A11.5 14.5 0 0 1 0 29Z" fill="#bccde0"/><path d="M7.5 8L3 14L7.5 20" fill="none" stroke="#e6eef6" stroke-width="1.3"/></svg>
<!-- CHARTS -->
<svg class="a" style="left:195px;top:480px" width="370" height="220" viewBox="195 480 370 220">
<rect x="248" y="499" width="285" height="146" fill="#e3e7ef"/>
<path d="M248 638.6H533" stroke="#cdd1d9" stroke-width="1"/>
<path d="M248 630.1H533" stroke="#a9adb5" stroke-width="1"/>
<path d="M248 621.6H533" stroke="#cdd1d9" stroke-width="1"/>
<path d="M248 613.1H533" stroke="#cdd1d9" stroke-width="1"/>
<path d="M248 604.7H533" stroke="#cdd1d9" stroke-width="1"/>
<path d="M248 596.2H533" stroke="#cdd1d9" stroke-width="1"/>
<path d="M248 587.7H533" stroke="#a9adb5" stroke-width="1"/>
<path d="M248 579.2H533" stroke="#cdd1d9" stroke-width="1"/>
<path d="M248 570.7H533" stroke="#cdd1d9" stroke-width="1"/>
<path d="M248 562.3H533" stroke="#cdd1d9" stroke-width="1"/>
<path d="M248 553.8H533" stroke="#cdd1d9" stroke-width="1"/>
<path d="M248 545.3H533" stroke="#a9adb5" stroke-width="1"/>
<path d="M248 536.8H533" stroke="#cdd1d9" stroke-width="1"/>
<path d="M248 528.3H533" stroke="#cdd1d9" stroke-width="1"/>
<path d="M248 519.9H533" stroke="#cdd1d9" stroke-width="1"/>
<path d="M248 511.4H533" stroke="#cdd1d9" stroke-width="1"/>
<path d="M248 502.9H533" stroke="#a9adb5" stroke-width="1"/>
<path d="M268.4 499V645" stroke="#c4c8d0" stroke-width="1"/>
<path d="M292.4 499V645" stroke="#c4c8d0" stroke-width="1"/>
<path d="M316.4 499V645" stroke="#c4c8d0" stroke-width="1"/>
<path d="M340.4 499V645" stroke="#c4c8d0" stroke-width="1"/>
<path d="M364.4 499V645" stroke="#8e9299" stroke-width="1"/>
<path d="M388.4 499V645" stroke="#c4c8d0" stroke-width="1"/>
<path d="M412.4 499V645" stroke="#c4c8d0" stroke-width="1"/>
<path d="M436.4 499V645" stroke="#c4c8d0" stroke-width="1"/>
<path d="M460.4 499V645" stroke="#c4c8d0" stroke-width="1"/>
<path d="M484.4 499V645" stroke="#8e9299" stroke-width="1"/>
<path d="M508.4 499V645" stroke="#c4c8d0" stroke-width="1"/>
<path d="M532.4 499V645" stroke="#c4c8d0" stroke-width="1"/>
<path d="M244 638.6H248" stroke="#333" stroke-width="1.2"/>
<path d="M241 630.1H248" stroke="#333" stroke-width="1.2"/>
<path d="M244 621.6H248" stroke="#333" stroke-width="1.2"/>
<path d="M244 613.1H248" stroke="#333" stroke-width="1.2"/>
<path d="M244 604.7H248" stroke="#333" stroke-width="1.2"/>
<path d="M244 596.2H248" stroke="#333" stroke-width="1.2"/>
<path d="M241 587.7H248" stroke="#333" stroke-width="1.2"/>
<path d="M244 579.2H248" stroke="#333" stroke-width="1.2"/>
<path d="M244 570.7H248" stroke="#333" stroke-width="1.2"/>
<path d="M244 562.3H248" stroke="#333" stroke-width="1.2"/>
<path d="M244 553.8H248" stroke="#333" stroke-width="1.2"/>
<path d="M241 545.3H248" stroke="#333" stroke-width="1.2"/>
<path d="M244 536.8H248" stroke="#333" stroke-width="1.2"/>
<path d="M244 528.3H248" stroke="#333" stroke-width="1.2"/>
<path d="M244 519.9H248" stroke="#333" stroke-width="1.2"/>
<path d="M244 511.4H248" stroke="#333" stroke-width="1.2"/>
<path d="M241 502.9H248" stroke="#333" stroke-width="1.2"/>
<path d="M268.4 645V649" stroke="#333" stroke-width="1.2"/>
<path d="M292.4 645V649" stroke="#333" stroke-width="1.2"/>
<path d="M316.4 645V649" stroke="#333" stroke-width="1.2"/>
<path d="M340.4 645V649" stroke="#333" stroke-width="1.2"/>
<path d="M364.4 645V651" stroke="#333" stroke-width="1.2"/>
<path d="M388.4 645V649" stroke="#333" stroke-width="1.2"/>
<path d="M412.4 645V649" stroke="#333" stroke-width="1.2"/>
<path d="M436.4 645V649" stroke="#333" stroke-width="1.2"/>
<path d="M460.4 645V649" stroke="#333" stroke-width="1.2"/>
<path d="M484.4 645V651" stroke="#333" stroke-width="1.2"/>
<path d="M508.4 645V649" stroke="#333" stroke-width="1.2"/>
<path d="M532.4 645V649" stroke="#333" stroke-width="1.2"/>
<path d="M379 499V645" stroke="#e8262a" stroke-width="1" stroke-dasharray="3,2"/>
<polyline fill="none" stroke="#5aa51c" stroke-width="2" stroke-linejoin="round" points="248.4,643.7 256.7,643.2 263.4,643.7 276.8,641.8 285.2,642.7 290.2,643.7 302.0,643.2 304.5,639.8 309.5,627.3 317.0,628.6 321.5,629.0 323.7,637.3 326.2,641.8 331.2,641.5 336.3,619.2 339.6,619.2 345.5,623.1 350.2,620.6 355.2,639.8 358.0,640.7 363.9,633.1 367.2,624.7 371.4,521.8 374.0,519.8 379.0,539.4 383.6,521.0 386.5,541.9 388.4,603.8 390.9,630.6 394.2,636.9 396.2,636.4 398.4,617.2 400.4,548.6 403.1,501.4 405.1,506.7 407.6,523.5 410.1,532.7 412.6,532.7 415.1,535.2 419.3,620.5 421.8,635.6 427.7,642.0 433.6,640.3 438.6,623.0 440.3,621.4 443.6,623.0 447.8,621.9 453.6,613.8 457.8,604.6 462.0,580.4 465.4,575.0 467.9,576.2 472.0,610.5 477.1,618.8 481.3,622.2 484.6,636.4 487.1,639.8 489.6,638.9 494.6,613.8 497.2,613.0 500.5,613.0 503.8,618.0 508.9,639.8 513.9,644.0 519.7,642.0 523.1,625.5 525.6,619.7 529.0,618.0"/>
<path d="M248 645V499H533V645Z" fill="none" stroke="#3c3c3c" stroke-width="1.6"/>
<text x="238" y="634.1" text-anchor="end" font-size="11" font-family="Liberation Sans" fill="#222">20</text>
<text x="238" y="591.7" text-anchor="end" font-size="11" font-family="Liberation Sans" fill="#222">30</text>
<text x="238" y="549.3" text-anchor="end" font-size="11" font-family="Liberation Sans" fill="#222">40</text>
<text x="238" y="506.9" text-anchor="end" font-size="11" font-family="Liberation Sans" fill="#222">50</text>
<text x="364.4" y="667" text-anchor="middle" font-size="11" font-family="Liberation Sans" fill="#222">50</text>
<text x="484.4" y="667" text-anchor="middle" font-size="11" font-family="Liberation Sans" fill="#222">100</text>
<text x="390" y="680" text-anchor="middle" font-size="11" font-family="Liberation Sans" fill="#222">Position</text>
<text x="0" y="0" transform="translate(223,572) rotate(-90)" text-anchor="middle" font-size="11" font-family="Liberation Sans" fill="#222">Temperatures</text>
</svg>
<svg class="a" style="left:585px;top:477px" width="364" height="220" viewBox="585 477 364 220">
<rect x="627.5" y="496.2" width="279.0" height="123.19999999999999" fill="#dfe3ea"/>
<path d="M627.5 610.5H906.5" stroke="#c8ccd4" stroke-width="1"/>
<path d="M627.5 601.7H906.5" stroke="#c8ccd4" stroke-width="1"/>
<path d="M627.5 592.8H906.5" stroke="#c8ccd4" stroke-width="1"/>
<path d="M627.5 583.9H906.5" stroke="#a4a8b0" stroke-width="1"/>
<path d="M627.5 575.1H906.5" stroke="#c8ccd4" stroke-width="1"/>
<path d="M627.5 566.2H906.5" stroke="#c8ccd4" stroke-width="1"/>
<path d="M627.5 557.3H906.5" stroke="#c8ccd4" stroke-width="1"/>
<path d="M627.5 548.5H906.5" stroke="#a4a8b0" stroke-width="1"/>
<path d="M627.5 539.6H906.5" stroke="#c8ccd4" stroke-width="1"/>
<path d="M627.5 530.8H906.5" stroke="#c8ccd4" stroke-width="1"/>
<path d="M627.5 521.9H906.5" stroke="#c8ccd4" stroke-width="1"/>
<path d="M627.5 513.0H906.5" stroke="#a4a8b0" stroke-width="1"/>
<path d="M627.5 504.2H906.5" stroke="#c8ccd4" stroke-width="1"/>
<rect x="627.50" y="595" width="3.30" height="24.4" fill="#0c0624"/>
<rect x="629.90" y="544" width="6.53" height="75.4" fill="#12082f"/>
<rect x="635.53" y="553" width="6.53" height="66.4" fill="#180a3b"/>
<rect x="641.16" y="535.2" width="6.53" height="84.2" fill="#210b4d"/>
<rect x="646.79" y="519.2" width="6.53" height="100.2" fill="#2a0c60"/>
<rect x="652.42" y="497.6" width="6.53" height="121.8" fill="#3f0c7a"/>
<rect x="658.05" y="500.5" width="6.53" height="118.9" fill="#540c95"/>
<rect x="663.68" y="506" width="6.53" height="113.4" fill="#690caf"/>
<rect x="669.31" y="519.2" width="6.53" height="100.2" fill="#710dac"/>
<rect x="674.94" y="531.5" width="6.53" height="87.9" fill="#790fa8"/>
<rect x="680.57" y="541.7" width="6.53" height="77.7" fill="#8111a4"/>
<rect x="686.20" y="570" width="6.53" height="49.4" fill="#8913a0"/>
<rect x="691.83" y="572" width="6.53" height="47.4" fill="#8f149e"/>
<rect x="697.46" y="579" width="6.53" height="40.4" fill="#95159d"/>
<rect x="703.09" y="582.9" width="6.53" height="36.5" fill="#9b169c"/>
<rect x="708.72" y="581.8" width="6.53" height="37.6" fill="#a2179b"/>
<rect x="714.35" y="578" width="6.53" height="41.4" fill="#a81899"/>
<rect x="719.98" y="575.3" width="6.53" height="44.1" fill="#ae1e91"/>
<rect x="725.61" y="574.3" width="6.53" height="45.1" fill="#b42489"/>
<rect x="731.24" y="573.4" width="6.53" height="46.0" fill="#b92980"/>
<rect x="736.87" y="576.3" width="6.53" height="43.1" fill="#bf2f78"/>
<rect x="742.50" y="577.2" width="6.53" height="42.2" fill="#c33770"/>
<rect x="748.13" y="577.2" width="6.53" height="42.2" fill="#c73f69"/>
<rect x="753.76" y="579.2" width="6.53" height="40.2" fill="#cb4761"/>
<rect x="759.39" y="585.8" width="6.53" height="33.6" fill="#d0505a"/>
<rect x="765.02" y="590.3" width="6.53" height="29.1" fill="#d45853"/>
<rect x="770.65" y="601" width="6.53" height="18.4" fill="#d8604c"/>
<rect x="776.28" y="602" width="6.53" height="17.4" fill="#dc6846"/>
<rect x="781.91" y="607" width="6.53" height="12.4" fill="#e0703f"/>
<rect x="787.54" y="607" width="6.53" height="12.4" fill="#e57538"/>
<rect x="793.17" y="610.3" width="6.53" height="9.1" fill="#ea7a31"/>
<rect x="798.80" y="603.4" width="6.53" height="16.0" fill="#ef7f2a"/>
<rect x="804.43" y="608" width="6.53" height="11.4" fill="#f48c1d"/>
<rect x="810.06" y="611" width="6.53" height="8.4" fill="#f99811"/>
<rect x="815.69" y="609.2" width="6.53" height="10.2" fill="#fb9f0c"/>
<rect x="821.32" y="607" width="6.53" height="12.4" fill="#fca408"/>
<rect x="826.95" y="611" width="6.53" height="8.4" fill="#fdaa04"/>
<rect x="832.58" y="609" width="6.53" height="10.4" fill="#ffb000"/>
<rect x="838.21" y="615" width="6.53" height="4.4" fill="#ffba00"/>
<rect x="843.84" y="615" width="6.53" height="4.4" fill="#ffc403"/>
<rect x="849.47" y="614" width="6.53" height="5.4" fill="#ffca21"/>
<rect x="855.10" y="615.7" width="6.53" height="3.7" fill="#ffd040"/>
<rect x="860.73" y="615" width="6.53" height="4.4" fill="#ffd353"/>
<rect x="866.36" y="616.8" width="6.53" height="2.6" fill="#ffd766"/>
<rect x="871.99" y="617" width="6.53" height="2.4" fill="#ffdb7a"/>
<rect x="877.62" y="616" width="6.53" height="3.4" fill="#ffdf8d"/>
<rect x="883.25" y="616" width="6.53" height="3.4" fill="#ffe49e"/>
<rect x="888.88" y="617.8" width="6.53" height="1.6" fill="#ffeaaf"/>
<rect x="894.51" y="617.8" width="6.53" height="1.6" fill="#fff0c0"/>
<path d="M619.5 619.4H627.5" stroke="#333" stroke-width="1.2"/>
<path d="M623.5 610.5H627.5" stroke="#333" stroke-width="1.2"/>
<path d="M623.5 601.7H627.5" stroke="#333" stroke-width="1.2"/>
<path d="M623.5 592.8H627.5" stroke="#333" stroke-width="1.2"/>
<path d="M619.5 583.9H627.5" stroke="#333" stroke-width="1.2"/>
<path d="M623.5 575.1H627.5" stroke="#333" stroke-width="1.2"/>
<path d="M623.5 566.2H627.5" stroke="#333" stroke-width="1.2"/>
<path d="M623.5 557.3H627.5" stroke="#333" stroke-width="1.2"/>
<path d="M619.5 548.5H627.5" stroke="#333" stroke-width="1.2"/>
<path d="M623.5 539.6H627.5" stroke="#333" stroke-width="1.2"/>
<path d="M623.5 530.8H627.5" stroke="#333" stroke-width="1.2"/>
<path d="M623.5 521.9H627.5" stroke="#333" stroke-width="1.2"/>
<path d="M619.5 513.0H627.5" stroke="#333" stroke-width="1.2"/>
<path d="M623.5 504.2H627.5" stroke="#333" stroke-width="1.2"/>
<path d="M627.5 619.4V496.2H906.5V619.4Z" fill="none" stroke="#3c3c3c" stroke-width="1.6"/>
<text x="616" y="623.4" text-anchor="end" font-size="11" font-family="Liberation Sans" fill="#222">0</text>
<text x="616" y="587.9" text-anchor="end" font-size="11" font-family="Liberation Sans" fill="#222">2</text>
<text x="616" y="552.5" text-anchor="end" font-size="11" font-family="Liberation Sans" fill="#222">4</text>
<text x="616" y="517.0" text-anchor="end" font-size="11" font-family="Liberation Sans" fill="#222">6</text>
<text x="0" y="0" transform="translate(607,556) rotate(-90)" text-anchor="middle" font-size="11" font-family="Liberation Sans" fill="#222">%</text>
<text x="628" y="634" text-anchor="middle" font-size="11" font-family="Liberation Sans" fill="#222">16.25 °C</text>
<text x="903" y="634" text-anchor="middle" font-size="11" font-family="Liberation Sans" fill="#222">53.22 °C</text>
<text x="767" y="648.5" text-anchor="middle" font-size="11" font-family="Liberation Sans" fill="#222">Temperatures</text>
<text x="595" y="684" font-size="11" font-family="Liberation Sans" fill="#222">Number of segments:</text>
</svg>
<div class="inp" style="left:712px;top:667px;width:38px;height:25px;border-color:#a9b3bf">50</div>
<!-- /CHARTS -->

<!-- ============ BOTTOM ============ -->
<div class="a" style="left:0;top:743px;width:1800px;height:183px;background:#dde5ee;border-top:4px solid #bccbdc"></div>

<!-- Physical quantities -->
<div class="grp" style="left:3px;top:760px;width:427px;height:162px"></div>
<div class="tab" style="left:10px;top:749px;width:117px;height:21px;padding-top:3px;font-size:11.5px">Physical Quantities</div>
<div class="t b" style="left:12px;top:778px;font-size:11.5px;color:#111">Target selection:</div>
<div class="a" style="left:129px;top:772px;width:297px;height:25px;background:linear-gradient(#efefef,#e2e2e2);border:1px solid #adadad"></div>
<div class="t" style="left:135px;top:777px;color:#3a3a3a">Image active</div>
<svg class="a" style="left:413px;top:782px" width="7" height="5" viewBox="0 0 7 5"><path d="M0.5 0.5L3.5 3.5L6.5 0.5" fill="none" stroke="#666" stroke-width="1"/></svg>
<div class="t b" style="left:12px;top:806px;font-size:11.5px;color:#111">Emissivity:</div>
<div class="inp" style="left:129px;top:800px;width:65px;height:25px;padding-top:2px">0.850</div>
<div class="a" style="left:193px;top:800px;width:23px;height:25px;background:linear-gradient(#eef2f7,#e2e8f0);border:1px solid #8d99a8"></div>
<svg class="a" style="left:198px;top:806px" width="13" height="12" viewBox="0 0 13 12"><rect x="0.5" y="0.5" width="12" height="11" fill="#fff" stroke="#555"/><rect x="0.5" y="0.5" width="12" height="2.5" fill="#555"/><g stroke="#666" stroke-width="0.8"><path d="M0.5 5.5H12.5M0.5 8.5H12.5M3.5 3V11.5M6.5 3V11.5M9.5 3V11.5"/></g></svg>
<div class="t b" style="left:222px;top:806px;font-size:11.5px;color:#111">Distance :</div>
<div class="inp" style="left:338px;top:800px;width:88px;height:25px;padding-top:2px;background:#f6f6f6;border-color:#bababa">2.00 m</div>
<div class="t b" style="left:12px;top:834px;font-size:11.5px;color:#111">Refl. Env. T°:</div>
<div class="inp" style="left:129px;top:828px;width:88px;height:25px;padding-top:2px">25.00 °C</div>
<div class="t b" style="left:222px;top:834px;font-size:11.5px;color:#111">Humidity:</div>
<div class="inp" style="left:338px;top:828px;width:88px;height:25px;padding-top:2px;background:#f6f6f6;border-color:#bababa">55.0 %</div>

<!-- Summary table -->
<div class="grp" style="left:437px;top:760px;width:1041px;height:162px"></div>
<div class="tab" style="left:445px;top:749px;width:94px;height:21px;padding-top:3px;font-size:11.5px">Summary table</div>
<div class="a" style="left:441px;top:770px;width:1033px;height:148px;background:#fff;border:1px solid #8f9baa;border-radius:2px"></div>
<div class="a" style="left:442px;top:790px;width:1031px;height:1px;background:#d8d8d8"></div>
<div class="a" style="left:531px;top:771px;width:1px;height:19px;background:#e4e4e4"></div>
<div class="a" style="left:598px;top:771px;width:1px;height:19px;background:#e4e4e4"></div>
<div class="a" style="left:666px;top:771px;width:1px;height:19px;background:#e4e4e4"></div>
<div class="a" style="left:733px;top:771px;width:1px;height:19px;background:#e4e4e4"></div>
<div class="a" style="left:801px;top:771px;width:1px;height:19px;background:#e4e4e4"></div>
<div class="a" style="left:868px;top:771px;width:1px;height:19px;background:#e4e4e4"></div>
<div class="a" style="left:936px;top:771px;width:1px;height:19px;background:#e4e4e4"></div>
<div class="a" style="left:1003px;top:771px;width:1px;height:19px;background:#e4e4e4"></div>
<div class="t" style="left:471px;top:774px;color:#2b3a55">Object</div>
<div class="t" style="left:539px;top:774px;color:#2b3a55">Avg. temp</div>
<div class="t" style="left:605px;top:774px;color:#2b3a55">Max. temp</div>
<div class="t" style="left:674px;top:774px;color:#2b3a55">Min. temp</div>
<div class="t" style="left:743px;top:774px;color:#2b3a55">Emissivity</div>
<div class="t" style="left:812px;top:774px;color:#2b3a55">Humidity</div>
<div class="t" style="left:873px;top:774px;color:#2b3a55">Refl. Env. T°</div>
<div class="t" style="left:948px;top:774px;color:#2b3a55">Distance</div>
<div class="a" style="left:442px;top:791px;width:1031px;height:60px;color:#2e3c5a">
 <svg class="a" style="left:10px;top:3px" width="13" height="12" viewBox="0 0 13 12"><rect x="0.5" y="0.5" width="12" height="11" fill="#fff" stroke="#444"/><path d="M1 10L4 6L7 9L9 7L12 10" fill="#666" stroke="#444" stroke-width="0.8"/><circle cx="8.5" cy="3.8" r="1.3" fill="#444"/><path d="M2 2.5H5" stroke="#444"/></svg>
 <div class="t" style="left:23px;top:3px;width:62px;overflow:hidden">20180215_103012_IR.png</div>
 <svg class="a" style="left:11px;top:22px" width="9" height="10" viewBox="0 0 9 10"><path d="M0.5 9.5L8.5 0.5" stroke="#333" stroke-width="1.2"/></svg>
 <div class="t" style="left:23px;top:23px">L0</div>
 <svg class="a" style="left:10px;top:42px" width="11" height="11" viewBox="0 0 11 11"><rect x="0.5" y="0.5" width="10" height="10" fill="#f4f4f4" stroke="#555"/></svg>
 <div class="t" style="left:23px;top:43px">R2</div>
 <div class="t" style="left:94px;top:3px">22.61 °C</div><div class="t" style="left:162px;top:3px">53.22 °C</div><div class="t" style="left:230px;top:3px">16.05 °C</div><div class="t" style="left:297px;top:3px">0.850</div><div class="t" style="left:364px;top:3px">55.0 %</div><div class="t" style="left:431px;top:3px">25.00 °C</div><div class="t" style="left:499px;top:3px">2.00 m</div>
 <div class="t" style="left:94px;top:23px">23.08 °C</div><div class="t" style="left:162px;top:23px">50.61 °C</div><div class="t" style="left:230px;top:23px">16.49 °C</div><div class="t" style="left:297px;top:23px">0.850</div><div class="t" style="left:364px;top:23px">55.0 %</div><div class="t" style="left:431px;top:23px">25.00 °C</div><div class="t" style="left:499px;top:23px">2.00 m</div>
 <div class="t" style="left:94px;top:43px">26.02 °C</div><div class="t" style="left:162px;top:43px">53.22 °C</div><div class="t" style="left:230px;top:43px">16.25 °C</div><div class="t" style="left:297px;top:43px">0.850</div><div class="t" style="left:364px;top:43px">55.0 %</div><div class="t" style="left:431px;top:43px">25.00 °C</div><div class="t" style="left:499px;top:43px">2.00 m</div>
</div>

<!-- Information -->
<div class="grp" style="left:1482px;top:760px;width:315px;height:162px"></div>
<div class="tab" style="left:1490px;top:749px;width:78px;height:20px;padding-top:3px;font-size:11.5px">Information</div>
<div class="t b" style="left:1491px;top:775px;font-size:11.5px;color:#111">Thermogram:</div>
<div class="t b" style="left:1491px;top:799px;font-size:11.5px;color:#111">Operator:</div>
<div class="t b" style="left:1491px;top:823px;font-size:11.5px;color:#111">Locations:</div>
<div class="t b" style="left:1491px;top:848px;font-size:11.5px;color:#111">Date:</div>
<div class="t b" style="left:1491px;top:872px;font-size:11.5px;color:#111">Camera:</div>
<div class="t b" style="left:1491px;top:896px;font-size:11.5px;color:#111">Comments:</div>
<div class="inp" style="left:1609px;top:770px;width:184px;height:21px;padding-top:2px">20180215_103012_IR.png</div>
<div class="inp" style="left:1609px;top:794px;width:184px;height:21px"></div>
<div class="inp" style="left:1609px;top:819px;width:184px;height:21px"></div>
<div class="inp" style="left:1609px;top:843px;width:184px;height:21px;padding-top:2px">15/02/2018 10:30</div>
<div class="inp" style="left:1609px;top:868px;width:184px;height:21px;padding-top:2px">Market/01.01g/ZZZZZ/000000000</div>
<div class="inp" style="left:1609px;top:892px;width:184px;height:21px"></div>

</body></html>
